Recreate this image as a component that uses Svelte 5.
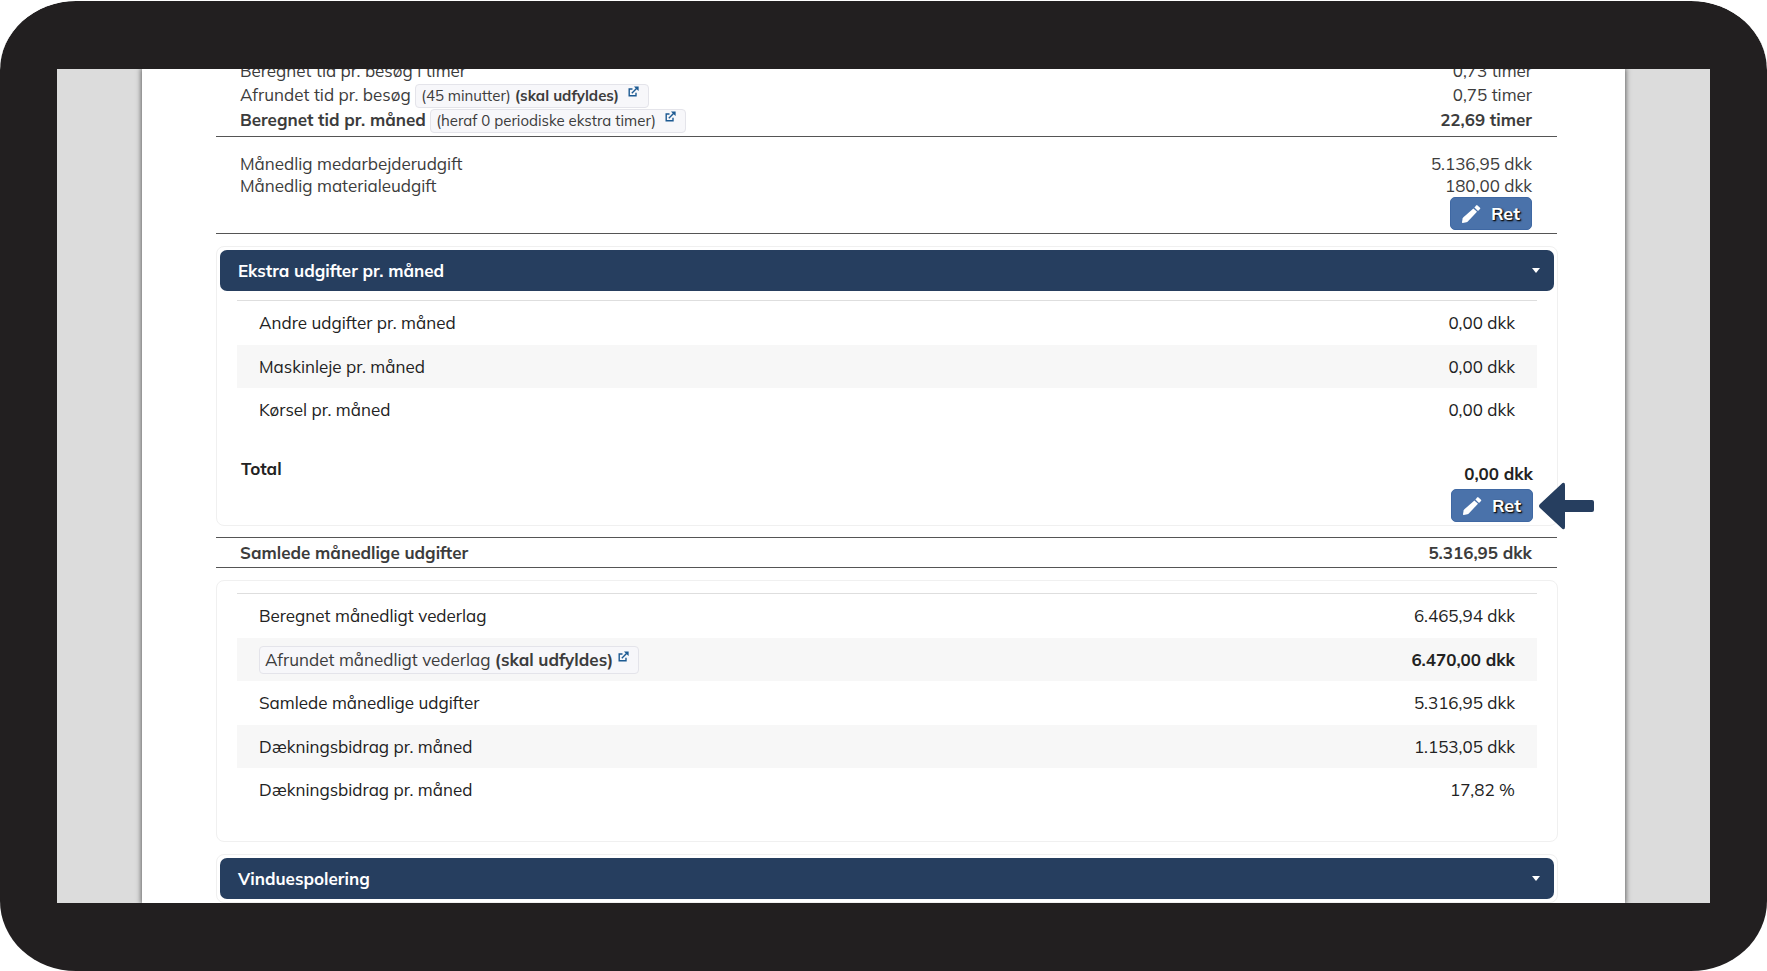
<script lang="ts">
    interface Row {
        label: string;
        value: string;
        required?: boolean;
    }

    const extraCosts: Row[] = [
        { label: "Andre udgifter pr. måned", value: "0,00 dkk" },
        { label: "Maskinleje pr. måned", value: "0,00 dkk" },
        { label: "Kørsel pr. måned", value: "0,00 dkk" },
    ];

    const result: Row[] = [
        { label: "Beregnet månedligt vederlag", value: "6.465,94 dkk" },
        { label: "Afrundet månedligt vederlag", value: "6.470,00 dkk", required: true },
        { label: "Samlede månedlige udgifter", value: "5.316,95 dkk" },
        { label: "Dækningsbidrag pr. måned", value: "1.153,05 dkk" },
        { label: "Dækningsbidrag pr. måned", value: "17,82 %" },
    ];

    let extraOpen = $state(true);
    let windowsOpen = $state(false);
</script>

{#snippet linkIcon()}
    <svg class="link-icon" viewBox="0 0 11 11" aria-hidden="true">
        <path d="M4.5 3H1.2V9.8H8V6.8M3.8 7.2L9 2" fill="none" stroke="currentColor" stroke-width="1.4" />
        <path d="M6 .4H10.6V5L9 3.6L7.4 2Z" fill="currentColor" />
    </svg>
{/snippet}

{#snippet editButton()}
    <button class="edit" type="button">
        <svg viewBox="0 0 20 20" aria-hidden="true">
            <path d="M1 18.2L1.6 14.6Q1.8 13.8 2.4 13.2L12.4 4.4L16 7.8L6.8 17.4Q6.2 18 5.4 18.2L1.8 19Q.9 19.1 1 18.2Z" fill="#fff" />
            <path d="M13.4 3.4L15.2 1.4Q15.8 .8 16.5 1.4L19 3.8Q19.6 4.5 19 5.1L17 6.9Z" fill="#fff" />
        </svg>
        <span>Ret</span>
    </button>
{/snippet}

{#snippet rows(items: Row[])}
    <table>
        <tbody>
            {#each items as row}
                <tr>
                    <th scope="row">
                        {#if row.required}
                            <a class="pill large" href="#afrundet">{row.label} <b>(skal udfyldes)</b>{@render linkIcon()}</a>
                        {:else}
                            {row.label}
                        {/if}
                    </th>
                    <td class:strong={row.required}>{row.value}</td>
                </tr>
            {/each}
        </tbody>
    </table>
{/snippet}

<div class="device">
    <div class="screen">
        <main class="paper">
            <section class="summary time">
                <div class="line">
                    <span>Beregnet tid pr. besøg i timer</span>
                    <span>0,73 timer</span>
                </div>
                <div class="line tall">
                    <span>Afrundet tid pr. besøg <a class="pill" href="#tid">(45 minutter) <b>(skal udfyldes)</b>{@render linkIcon()}</a></span>
                    <span>0,75 timer</span>
                </div>
                <div class="line tall">
                    <span><b>Beregnet tid pr. måned</b> <a class="pill" href="#periodisk">(heraf 0 periodiske ekstra timer){@render linkIcon()}</a></span>
                    <b>22,69 timer</b>
                </div>
            </section>

            <section class="summary costs">
                <div class="line">
                    <span>Månedlig medarbejderudgift</span>
                    <span>5.136,95 dkk</span>
                </div>
                <div class="line">
                    <span>Månedlig materialeudgift</span>
                    <span>180,00 dkk</span>
                </div>
                {@render editButton()}
            </section>

            <section class="card">
                <button class="card-header" type="button" aria-expanded={extraOpen} onclick={() => (extraOpen = !extraOpen)}>
                    <span>Ekstra udgifter pr. måned</span>
                    <i class="caret"></i>
                </button>
                {#if extraOpen}
                    <div class="card-body">
                        {@render rows(extraCosts)}
                    </div>
                    <div class="total">
                        <b>Total</b>
                        <div class="total-value">
                            <b>0,00 dkk</b>
                            <div class="pointed">
                                {@render editButton()}
                                <svg class="arrow" viewBox="0 0 55 48" aria-hidden="true">
                                    <path d="M1 22L23.5 1Q26 0 26 3V18H53Q55 18 55 20V28Q55 30 53 30H26V45Q26 48 23.5 47L1 26Q-1 24 1 22Z" fill="#263e5f" />
                                </svg>
                            </div>
                        </div>
                    </div>
                {/if}
            </section>

            <section class="summary sum">
                <div class="line">
                    <b>Samlede månedlige udgifter</b>
                    <b>5.316,95 dkk</b>
                </div>
            </section>

            <section class="card">
                <div class="card-body result">
                    {@render rows(result)}
                </div>
            </section>

            <section class="card">
                <button class="card-header" type="button" aria-expanded={windowsOpen} onclick={() => (windowsOpen = !windowsOpen)}>
                    <span>Vinduespolering</span>
                    <i class="caret"></i>
                </button>
            </section>
        </main>
    </div>
</div>

<style>
    :global(body) {
        background: #fff;
    }

    .device {
        box-sizing: border-box;
        height: 100vh;
        padding: 68px 57px;
        border-top: 1px solid #fff;
        border-radius: 76px / 70px;
        background: #221f20;
        background-clip: padding-box;
        font-family: Mulish, Muli, Lato, sans-serif;
        font-size: 17px;
        line-height: 22px;
        color: #3c3c3c;
    }

    .screen {
        box-sizing: border-box;
        height: 100%;
        padding: 0 85px;
        overflow: hidden;
        background: #dcdcdc;
    }

    .paper {
        display: flow-root;
        box-sizing: border-box;
        min-height: 100%;
        padding: 0 67px 0 74px;
        background: #fff;
        box-shadow: 0 0 5px 1px #666;
    }

    .summary {
        margin-right: 1px;
        padding: 0 25px 0 24px;
        border-bottom: 1px solid #555;
    }

    .line {
        display: flex;
        justify-content: space-between;
        align-items: baseline;
    }

    .line.tall {
        height: 25px;
        line-height: 25px;
    }

    .time {
        margin-top: -9px;
        padding-bottom: 4px;
    }

    .costs {
        display: flex;
        flex-direction: column;
        padding-top: 16px;
        padding-bottom: 3px;
    }

    .costs .edit {
        align-self: flex-end;
    }

    .sum {
        margin-top: 11px;
        padding-top: 4px;
        padding-bottom: 3px;
        border-top: 1px solid #555;
    }

    .pill {
        display: inline-block;
        box-sizing: border-box;
        height: 24px;
        padding: 0 9px 0 5px;
        border: 1px solid #e4e4ea;
        border-radius: 4px;
        background: #f7f7fa;
        font-size: 15px;
        line-height: 22px;
        color: #3c3c3c;
        text-decoration: none;
    }

    .pill.large {
        height: 28px;
        font-size: 17px;
        line-height: 26px;
        vertical-align: middle;
    }

    .link-icon {
        width: 11px;
        height: 11px;
        margin-left: 9px;
        vertical-align: 4px;
        color: #1c5a92;
    }

    .large .link-icon {
        margin-left: 5px;
    }

    .edit {
        display: flex;
        align-items: center;
        justify-content: space-between;
        box-sizing: border-box;
        width: 82px;
        height: 33px;
        padding: 0 11px 0 10px;
        border: 1px solid #3f68a3;
        border-radius: 5px;
        background: #4a72aa;
        font: inherit;
        font-size: 18px;
        font-weight: 700;
        color: #fff;
        text-shadow: 1px 1px 1px #111, 1px 1px 2px #111;
        cursor: pointer;
    }

    .edit svg {
        width: 20px;
        height: 20px;
    }

    .card {
        margin-top: 12px;
        padding: 3px;
        border: 1px solid #f0f0f0;
        border-radius: 8px;
        color: #222;
    }

    .card-header {
        display: flex;
        justify-content: space-between;
        align-items: center;
        width: 100%;
        height: 41px;
        padding: 0 14px 0 18px;
        border: 0;
        border-radius: 7px;
        background: #263e5f;
        font: inherit;
        font-weight: 700;
        color: #fff;
        cursor: pointer;
    }

    .caret {
        border: 4px solid transparent;
        border-top: 5px solid #fff;
        border-bottom: 0;
    }

    .card-body {
        margin: 9px 17px 0;
        border-top: 1px solid #dedede;
    }

    .card-body.result {
        padding-bottom: 26px;
    }

    table {
        width: 100%;
        border-collapse: collapse;
    }

    tr {
        height: 44px;
    }

    tr:nth-child(even) {
        height: 43px;
        background: #f7f7f7;
    }

    th,
    td {
        padding: 0 22px;
        font-weight: 400;
        text-align: left;
    }

    td {
        text-align: right;
    }

    .strong {
        font-weight: 700;
    }

    .total {
        display: flex;
        justify-content: space-between;
        padding: 26px 21px 0;
    }

    .total-value {
        display: flex;
        flex-direction: column;
        align-items: flex-end;
        gap: 4px;
        padding-top: 5px;
    }

    .pointed {
        position: relative;
    }

    .arrow {
        position: absolute;
        top: -7px;
        left: 88px;
        width: 55px;
        height: 48px;
    }
</style>
